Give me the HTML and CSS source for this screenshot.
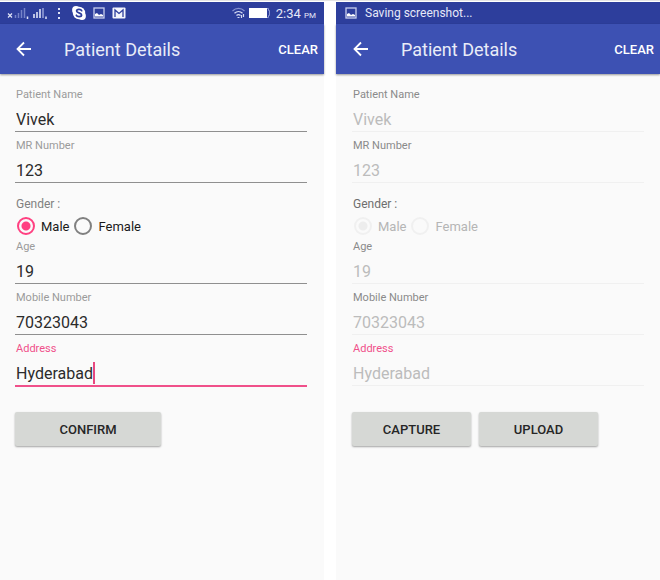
FILE: index.html
```
<!DOCTYPE html>
<html lang="en">
<head>
  <meta charset="UTF-8" />
  <meta name="viewport" content="width=device-width, initial-scale=1.0"/>
  <title>Patient Details</title>
  <link rel="stylesheet" href="styles.css">
</head>
<body>
  <div class="screens">
    <!-- Edit screen -->
    <section class="phone phone-edit">
      <div class="status-bar">
        <svg class="signal" width="40" height="14" viewBox="0 0 40 14">
          <path d="M1 7.500l4 4M5 7.500l-4 4" stroke="#dfe3f6" stroke-width="1.200" fill="none"/>
          <path d="M8.500 12V9M11.500 12V7M14.500 12V4M17.500 12V2" stroke="#7683c8" stroke-width="1.500"/>
          <path d="M20.500 10.500v2.500M39 10.500v2.500" stroke="#dfe3f6" stroke-width="1.500"/>
          <path d="M27 12V8M30 12V6M33 12V3" stroke="#dfe3f6" stroke-width="1.600"/>
          <path d="M36 12V2" stroke="#98a3da" stroke-width="1.500"/>
        </svg>
        <svg class="dots" width="4" height="14" viewBox="0 0 4 14" fill="#dfe3f6">
          <rect x="1" y="2" width="2" height="2"/><rect x="1" y="6" width="2" height="2"/><rect x="1" y="11" width="2" height="2"/>
        </svg>
        <svg class="skype" width="14" height="14" viewBox="0 0 14 14">
          <circle cx="7" cy="7" r="6.200" fill="#fff"/><circle cx="4" cy="4" r="3.900" fill="#fff"/><circle cx="10" cy="10" r="3.900" fill="#fff"/>
          <path d="M9.700 4.700C9 3 4.600 2.900 4.600 5c0 2.200 5 1.500 5 3.900 0 2.300-4.700 2.100-5.300.3" fill="none" stroke="#2d3e9c" stroke-width="1.700" stroke-linecap="round"/>
        </svg>
        <svg class="picture" width="12" height="12" viewBox="0 0 12 12">
          <rect x="1" y="1" width="10" height="10" fill="none" stroke="#c9cfee" stroke-width="1.300"/>
          <path d="M2 9.500V7l2-1 2 2 2-1 2 1v1.500z" fill="#fff"/>
        </svg>
        <svg class="mail" width="14" height="12" viewBox="0 0 14 12">
          <rect x="0.500" y="0.500" width="13" height="11" rx="1" fill="#f4f5fc"/>
          <path d="M3 10V3l4 3.500L11 3v7" fill="none" stroke="#2d3e9c" stroke-width="1.300"/>
        </svg>
        <svg class="wifi" width="13" height="12" viewBox="0 0 13 12" fill="none">
          <path d="M.5 4C4 .5 9 .5 12.500 4" stroke="#8591cf" stroke-width="1.200"/>
          <path d="M2.500 6.300c2.300-2.200 5.700-2.200 8 0M4.500 8.500c1.200-1.100 2.800-1.100 4 0" stroke="#d5daf2" stroke-width="1.300"/>
          <path d="M5.500 10.500h2M9.500 8v3M11.500 7v3" stroke="#d5daf2" stroke-width="1.200"/>
        </svg>
        <svg class="battery" width="21" height="10" viewBox="0 0 21 10">
          <rect width="18" height="10" fill="#fff"/>
          <path d="M18 .5h1.500v2h1v5h-1v2H18" fill="none" stroke="#8591cf"/>
        </svg>
        <span class="clock">2:34 <small>PM</small></span>
      </div>
      <header class="app-bar">
        <button class="back" type="button" aria-label="Back">
          <svg width="16" height="16" viewBox="0 0 16 16"><path d="M16 8H3M9 1.500L2.500 8 9 14.500" fill="none" stroke="#fff" stroke-width="1.800"/></svg>
        </button>
        <h1>Patient Details</h1>
        <button class="clear" type="button">CLEAR</button>
      </header>
      <form class="form">
        <div class="field">
          <label for="name-1">Patient Name</label>
          <input id="name-1" type="text" value="Vivek">
        </div>
        <div class="field">
          <label for="mr-1">MR Number</label>
          <input id="mr-1" type="text" value="123">
        </div>
        <fieldset class="gender">
          <legend>Gender :</legend>
          <div class="options">
            <label><input type="radio" name="gender-1" checked>Male</label>
            <label><input type="radio" name="gender-1">Female</label>
          </div>
        </fieldset>
        <div class="field">
          <label for="age-1">Age</label>
          <input id="age-1" type="text" value="19">
        </div>
        <div class="field">
          <label for="mobile-1">Mobile Number</label>
          <input id="mobile-1" type="text" value="70323043">
        </div>
        <div class="field active">
          <label for="address-1">Address</label>
          <input id="address-1" type="text" value="Hyderabad">
          <span class="caret"></span>
        </div>
        <div class="actions">
          <button class="btn btn-wide" type="button">CONFIRM</button>
        </div>
      </form>
    </section>

    <!-- Confirmed screen, fields locked -->
    <section class="phone phone-locked">
      <div class="status-bar">
        <svg class="picture" width="12" height="12" viewBox="0 0 12 12">
          <rect x="1" y="1" width="10" height="10" fill="none" stroke="#c9cfee" stroke-width="1.300"/>
          <path d="M2 9.500V7l2-1 2 2 2-1 2 1v1.500z" fill="#fff"/>
        </svg>
        <span class="notice">Saving screenshot...</span>
      </div>
      <header class="app-bar">
        <button class="back" type="button" aria-label="Back">
          <svg width="16" height="16" viewBox="0 0 16 16"><path d="M16 8H3M9 1.500L2.500 8 9 14.500" fill="none" stroke="#fff" stroke-width="1.800"/></svg>
        </button>
        <h1>Patient Details</h1>
        <button class="clear" type="button">CLEAR</button>
      </header>
      <form class="form">
        <div class="field">
          <label for="name-2">Patient Name</label>
          <input id="name-2" type="text" value="Vivek" disabled>
        </div>
        <div class="field">
          <label for="mr-2">MR Number</label>
          <input id="mr-2" type="text" value="123" disabled>
        </div>
        <fieldset class="gender">
          <legend>Gender :</legend>
          <div class="options">
            <label><input type="radio" name="gender-2" checked disabled>Male</label>
            <label><input type="radio" name="gender-2" disabled>Female</label>
          </div>
        </fieldset>
        <div class="field">
          <label for="age-2">Age</label>
          <input id="age-2" type="text" value="19" disabled>
        </div>
        <div class="field">
          <label for="mobile-2">Mobile Number</label>
          <input id="mobile-2" type="text" value="70323043" disabled>
        </div>
        <div class="field active">
          <label for="address-2">Address</label>
          <input id="address-2" type="text" value="Hyderabad" disabled>
        </div>
        <div class="actions">
          <button class="btn" type="button">CAPTURE</button>
          <button class="btn" type="button">UPLOAD</button>
        </div>
      </form>
    </section>
  </div>
</body>
</html>
```
FILE: styles.css
```
* { box-sizing: border-box; margin: 0; padding: 0; }
body {
  font-family: Roboto, sans-serif;
  background: #fff;
  color: #212121;
}
button, input {
  font-family: inherit;
}
svg {
  display: block;
  flex: none;
}
.screens {
  display: grid;
  grid-template-columns: 1fr 1fr;
  gap: 12px;
  min-height: 100vh;
  padding-top: 1px;
  border-top: 1px solid #e4e4e4;
}
.phone {
  --start: 16px;
  --end: 16px;
  background: #fafafa;
}
.phone-edit {
  --start: 15px;
  --end: 17px;
}

/* status bar */
.status-bar {
  display: flex;
  align-items: center;
  height: 22px;
  padding: 0 8px 0 7px;
  background: #2d3e9c;
  color: #e6e9f8;
  font-size: 12px;
}
.dots { margin-left: 10px; }
.skype { margin-left: 11px; }
.phone-edit .picture { margin-left: 7px; }
.mail { margin-left: 7px; }
.wifi { margin-left: auto; }
.battery { margin-left: 4px; }
.clock { margin-left: 6px; font-size: 13px; }
.clock small { font-size: 8px; }
.phone-locked .status-bar { padding-left: 9px; }
.notice { margin-left: 8px; }

/* app bar */
.app-bar {
  display: flex;
  align-items: center;
  height: 50px;
  padding: 0 6px 0 var(--start);
  background: #3d51b3;
  color: #fff;
  box-shadow: 0 1px 2px rgba(0, 0, 0, 0.4);
}
.app-bar button {
  border: none;
  background: none;
  color: #fff;
}
.app-bar h1 {
  flex: 1;
  margin-left: 33px;
  font-size: 18px;
  font-weight: 400;
  color: #e9ecf8;
}
.app-bar .clear {
  font-size: 13px;
  font-weight: 500;
}

/* form */
.form {
  padding: 12px var(--end) 0 var(--start);
}
.field {
  position: relative;
}
.field + .field {
  margin-top: 5px;
}
.field label {
  display: block;
  padding-left: 1px;
  font-size: 11px;
  line-height: 18px;
  color: #9b9b9b;
}
.field input {
  display: block;
  width: 100%;
  height: 28px;
  padding: 4px 0 0 1px;
  border: none;
  border-bottom: 1px solid #8f8f8f;
  border-radius: 0;
  background: none;
  font-size: 16px;
  color: #2b2b2b;
  outline: none;
}
.phone-locked .field label { color: #8a8a8a; }
.field input:disabled {
  border-bottom-color: #f0f0f0;
  color: #bcbcbc;
}
.phone .field.active label { color: #f0508a; }
.phone-edit .field.active input {
  height: 29px;
  border-bottom: 2px solid #f0508a;
}
.phone-edit .actions { margin-top: 25px; }
.caret {
  position: absolute;
  left: 78px;
  bottom: 3px;
  width: 2px;
  height: 22px;
  background: #e8487f;
}
.gender {
  border: none;
  padding-top: 12px;
}
.gender legend {
  float: left;
  width: 100%;
  padding-left: 1px;
  font-size: 12px;
  line-height: 18px;
  color: #808080;
}
.options {
  clear: both;
  display: flex;
  gap: 5px;
  padding: 1px 0 0 2px;
}
.options label {
  display: flex;
  align-items: center;
  gap: 6px;
  height: 24px;
  font-size: 13px;
  color: #1a1a1a;
}
.options input {
  appearance: none;
  width: 18px;
  height: 18px;
  border: 2px solid #808080;
  border-radius: 50%;
}
.options input:checked {
  border-color: #ff4081;
  background: radial-gradient(circle, #ff4081 4px, transparent 5px);
}
.phone-locked .gender legend { color: #6e6e6e; }
.phone-locked .options label { color: #b5b5b5; }
.options input:disabled { border-color: #f0f0f0; }
.options input:checked:disabled {
  border-color: #f0f0f0;
  background: radial-gradient(circle, #ededed 4px, transparent 5px);
}

/* buttons */
.actions {
  display: flex;
  gap: 8px;
  margin-top: 26px;
}
.btn {
  width: 119px;
  height: 34px;
  border: none;
  border-radius: 2px;
  background: #d6d8d5;
  box-shadow: 0 1px 2px rgba(0, 0, 0, 0.35);
  font-size: 13px;
  font-weight: 500;
  color: #262626;
}
.btn-wide { width: 146px; }
```
